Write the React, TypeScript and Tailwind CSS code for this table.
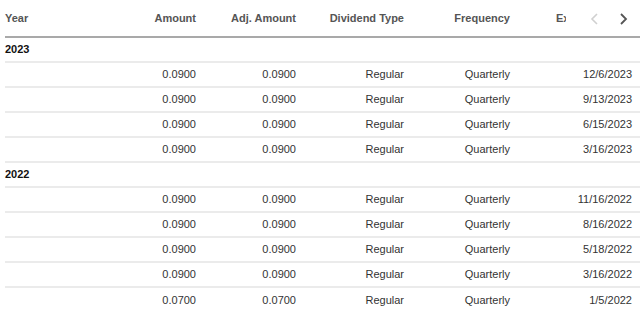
const groups = [
    {
        year: "2023",
        rows: [
            ["0.0900", "0.0900", "Regular", "Quarterly", "12/6/2023"],
            ["0.0900", "0.0900", "Regular", "Quarterly", "9/13/2023"],
            ["0.0900", "0.0900", "Regular", "Quarterly", "6/15/2023"],
            ["0.0900", "0.0900", "Regular", "Quarterly", "3/16/2023"],
        ],
    },
    {
        year: "2022",
        rows: [
            ["0.0900", "0.0900", "Regular", "Quarterly", "11/16/2022"],
            ["0.0900", "0.0900", "Regular", "Quarterly", "8/16/2022"],
            ["0.0900", "0.0900", "Regular", "Quarterly", "5/18/2022"],
            ["0.0900", "0.0900", "Regular", "Quarterly", "3/16/2022"],
            ["0.0700", "0.0700", "Regular", "Quarterly", "1/5/2022"],
        ],
    },
];

const cols = "grid grid-cols-[100px_91px_100px_108px_106px_122px] items-center";

const App = (): JSX.Element => {
    const total = groups.reduce((n, g) => n + g.rows.length + 1, 0);
    let idx = 0;

    return (
        <div className="w-[640px] h-[323px] bg-white overflow-hidden font-['Liberation_Sans',Arial,sans-serif] text-[11px]">
            <div className="relative ml-[5px]">
                <div className={`${cols} h-[38px] border-b-2 border-[#a9a9a9] font-bold text-[#555555]`}>
                    <span>Year</span>
                    <span className="text-right">Amount</span>
                    <span className="text-right">Adj. Amount</span>
                    <span className="text-right">Dividend Type</span>
                    <span className="text-right">Frequency</span>
                    <span className="pl-[46px] whitespace-nowrap">Ex-Date</span>
                </div>
                <div className="absolute top-0 right-0 w-[74px] h-[35px] bg-white flex items-center">
                    <svg width="74" height="35" viewBox="0 0 74 35">
                        <polyline points="31,14 26,19 31,24" fill="none" stroke="#d0d0d0" strokeWidth="1.6" />
                        <polyline points="55,14 60,19 55,24" fill="none" stroke="#555555" strokeWidth="1.8" />
                    </svg>
                </div>

                {groups.map((g) => {
                    idx++;
                    const groupLast = idx === total;
                    return (
                        <div key={g.year}>
                            <div className={`h-[25px] flex items-center font-bold text-[#111111] ${groupLast ? "" : "border-b-2 border-[#ebebeb]"}`}>
                                {g.year}
                            </div>
                            {g.rows.map((r, i) => {
                                idx++;
                                const last = idx === total;
                                return (
                                    <div key={i} className={`${cols} h-[25px] text-[#333333] ${last ? "" : "border-b-2 border-[#ebebeb]"}`}>
                                        <span></span>
                                        <span className="text-right">{r[0]}</span>
                                        <span className="text-right">{r[1]}</span>
                                        <span className="text-right">{r[2]}</span>
                                        <span className="text-right">{r[3]}</span>
                                        <span className="text-right">{r[4]}</span>
                                    </div>
                                );
                            })}
                        </div>
                    );
                })}
            </div>
        </div>
    );
};

export default App;
